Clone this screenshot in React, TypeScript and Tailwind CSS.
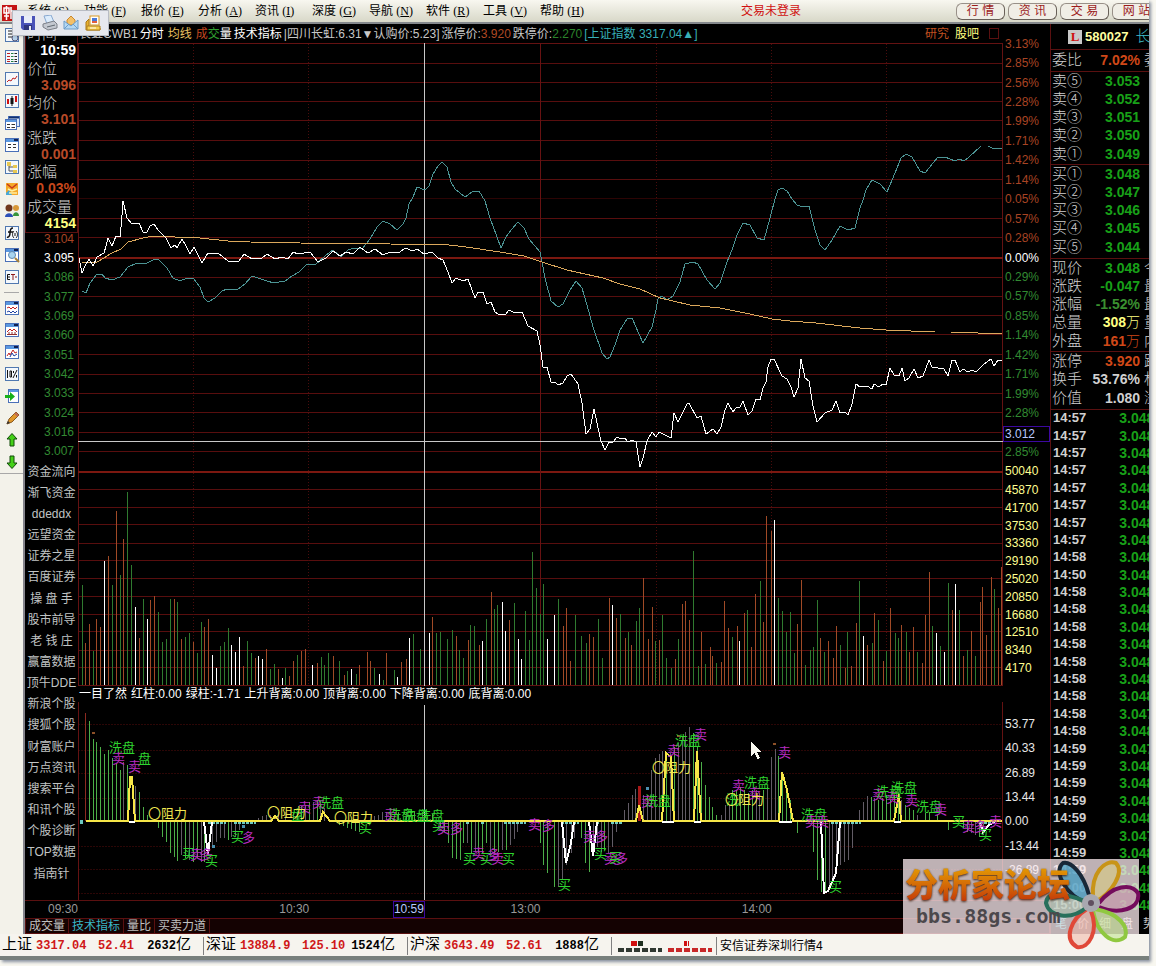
import type { ReactNode } from 'react'
import clsx from 'clsx'

const MENU = [
  ['系统', 'S'], ['功能', 'F'], ['报价', 'E'], ['分析', 'A'], ['资讯', 'I'],
  ['深度', 'G'], ['导航', 'N'], ['软件', 'R'], ['工具', 'V'], ['帮助', 'H'],
]

const CURSOR_INFO = [
  ['时间', '10:59', 'text-white'],
  ['价位', '3.096', 'text-[#b84a28]'],
  ['均价', '3.101', 'text-[#b84a28]'],
  ['涨跌', '0.001', 'text-[#b84a28]'],
  ['涨幅', '0.03%', 'text-[#c8481c]'],
  ['成交量', '4154', 'text-[#ffff80]'],
]

const PRICE_LABELS = ['3.104', '3.095', '3.086', '3.077', '3.069', '3.060', '3.051', '3.042', '3.033', '3.024', '3.016', '3.007']

const SIDE_LINKS = [
  '资金流向', '渐飞资金', 'ddeddx', '远望资金', '证券之星', '百度证券', '操 盘 手', '股市前导', '老 钱 庄', '赢富数据',
  '顶牛DDE', '新浪个股', '搜狐个股', '财富账户', '万点资讯', '搜索平台', '和讯个股', '个股诊断', 'TOP数据', '指南针',
]

const PERCENT_LABELS = [
  '3.13%', '2.85%', '2.56%', '2.28%', '1.99%', '1.71%', '1.42%', '1.14%', '0.05%', '0.57%', '0.28%', '0.00%',
  '0.29%', '0.57%', '0.85%', '1.14%', '1.42%', '1.71%', '1.99%', '2.28%', '', '2.85%', '50040',
]
const VOLUME_LABELS = ['45870', '41700', '37530', '33360', '29190', '25020', '20850', '16680', '12510', '8340', '4170']
const INDICATOR_LABELS = ['53.77', '40.33', '26.89', '13.44', '0.00', '-13.44', '-26.89']

const SELL = [['⑤', '3.053'], ['④', '3.052'], ['③', '3.051'], ['②', '3.050'], ['①', '3.049']]
const BUY = [['①', '3.048'], ['②', '3.047'], ['③', '3.046'], ['④', '3.045'], ['⑤', '3.044']]
const QUOTE = [
  ['现价', '3.048', '今', 'text-[#18a018]'],
  ['涨跌', '-0.047', '最', 'text-[#18a018]'],
  ['涨幅', '-1.52%', '最', 'text-[#3a9030]'],
  ['总量', '308万', '量', 'text-[#ffff80]'],
  ['外盘', '161万', '内', 'text-[#d04818]'],
]
const LIMITS = [
  ['涨停', '3.920', '跌', 'text-[#d04818]'],
  ['换手', '53.76%', '权', 'text-[#d0d0d0]'],
  ['价值', '1.080', '溢', 'text-[#d0d0d0]'],
]
const TICKS = [
  ...Array(8).fill('14:57'), '14:58', '14:50', ...Array(9).fill('14:58'), ...Array(8).fill('14:59'), '15:00', '15:00',
] as string[]
const LOWER_TICKS = [17, 19, 24]

const GRID_Y = [
  63, 82, 101, 120, 140, 160, 179, 198, 218, 237, 277, 296, 315, 334, 354, 374, 393, 412, 432, 451,
  489, 507, 524, 543, 560, 578, 596, 614, 631, 650, 667,
]
const GRID_X = [193, 308, 656, 771, 886]

const PRICE =
  '79,258 82,273 85,266 89,259 93,266 97,257 104,253 106,246 108,238 112,246 116,236 120,237 121,227 122,215 123,201 127,218 132,224 139,223 143,232 147,232 150,226 154,224 158,230 166,238 171,248 175,245 177,248 182,239 186,246 190,254 194,247 202,263 208,253 218,253 228,261 239,261 244,254 252,259 262,258 267,254 275,259 282,257 288,259 293,252 298,254 310,252 318,262 326,258 333,251 340,256 346,252 353,254 360,247 368,253 375,249 383,255 390,252 400,252 405,248 413,251 417,249 424,254 432,252 438,258 443,260 448,272 452,283 456,278 463,281 468,279 475,298 478,292 483,292 487,304 491,302 495,312 498,314 506,314 509,310 513,312 522,312 528,326 537,331 540,345 543,367 547,367 551,382 555,382 558,385 563,383 567,376 571,374 578,384 582,403 586,434 590,429 594,409 597,423 601,441 605,450 609,442 613,442 617,437 621,439 625,438 628,442 632,440 636,442 640,467 643,458 647,441 652,432 656,437 659,432 671,438 674,413 678,422 683,412 687,404 689,403 697,418 701,416 706,434 713,429 717,434 721,427 725,410 728,403 733,412 736,408 740,407 743,401 748,415 752,411 756,399 760,400 763,388 766,382 768,367 771,359 774,359 782,376 787,379 791,387 794,397 798,388 801,359 805,378 809,381 813,406 817,422 825,413 832,410 836,401 840,413 845,412 848,415 852,404 856,384 860,387 867,386 872,389 874,384 879,387 883,384 886,385 890,368 894,375 899,376 902,368 905,381 909,378 914,369 918,378 923,376 929,360 932,367 944,369 948,376 952,360 955,360 960,372 963,369 968,372 972,370 976,372 983,365 991,359 994,366 998,360 1002,360'
const AVERAGE =
  '82,262 97,262 104,258 110,254 121,249 128,242 143,238 153,236 175,237 200,238 228,241 250,242 300,243 390,244 449,245 466,247 500,252 524,256 542,262 567,270 603,278 620,284 640,289 660,298 690,305 700,306 720,308 750,314 772,319 790,321 816,323 860,328 886,330 935,332'
const AVERAGE_TAIL = '951,332 978,333 1002,334'
const INDEX =
  '82,291 86,293 90,283 97,274 102,274 105,278 112,280 120,277 128,267 137,263 147,263 155,259 159,260 167,268 173,278 180,281 187,278 194,279 200,287 204,298 208,302 215,298 222,291 227,289 238,289 245,284 252,276 258,278 267,281 274,283 285,281 292,276 299,272 307,264 315,265 325,256 333,250 341,257 348,250 354,248 362,249 370,239 377,227 383,221 390,224 397,230 403,224 406,218 409,204 413,197 417,187 425,190 429,186 433,174 438,166 442,162 447,167 451,182 455,189 465,197 472,192 479,191 485,201 490,218 497,237 501,248 506,237 512,229 518,222 524,228 529,239 540,252 542,262 545,278 551,301 558,307 563,304 570,290 576,281 582,288 587,305 593,327 602,353 607,359 610,357 615,345 620,330 627,319 632,318 643,343 652,327 656,310 658,299 662,296 667,300 673,296 680,282 685,264 693,262 698,264 707,280 715,289 720,283 727,262 732,250 737,235 743,223 750,225 757,238 764,240 770,218 775,199 778,190 782,188 787,191 792,199 797,205 803,207 809,206 815,230 820,245 825,250 832,240 840,226 848,230 855,228 860,208 863,200 866,190 872,180 880,184 887,192 895,173 901,158 906,154 912,157 920,171 925,173 933,163 938,157 945,157 955,161 959,159 964,161 969,157 981,146'
const INDEX_TAIL = '988,146 994,149 1002,148'

// each bar is colour letter + x,y of its tip
const VOLUME =
  'g82,585 r85,643 r89,624 g93,651 r96,619 r100,627 w104,561 r108,556 g112,585 r116,511 g120,575 r123,539 g127,492 g131,565 w135,607 r139,638 g143,599 w147,619 r150,600 r154,596 g158,612 g162,642 g166,639 g170,599 r174,599 g177,602 r181,639 g185,637 g189,633 r193,642 g197,653 g201,622 r204,627 r208,619 w212,655 w216,668 g220,646 g224,642 g228,628 w231,645 w235,652 w239,637 r243,666 g247,641 g251,653 r255,658 w258,656 w262,659 r266,649 g270,669 g274,664 r278,669 w282,678 g285,668 r289,676 r293,661 g297,655 r301,651 r305,649 w312,665 r317,663 g321,657 g324,665 g328,653 r333,656 g339,661 r344,675 g347,671 w351,669 g356,674 r359,665 r367,652 r370,661 g374,668 w379,674 g383,680 r386,653 g394,670 w397,677 r401,662 r406,659 w409,638 g413,634 g420,649 w429,633 r432,617 g436,633 g440,632 g447,639 g452,630 r456,636 g459,650 g463,658 r468,640 g470,625 g474,626 r479,645 w482,641 g486,619 r491,592 g494,609 g497,605 w502,602 w505,631 r509,620 g514,603 w518,639 w521,659 g525,611 g529,640 g532,552 g536,588 g540,614 g543,584 w547,639 w554,615 g558,599 r563,626 r566,608 r570,661 g575,615 g581,636 g586,643 r589,634 r593,637 g598,619 g602,658 r609,598 w612,605 r616,618 g620,614 r625,638 g628,632 r631,645 g636,621 g639,608 r643,578 r648,639 r652,607 g655,641 r659,640 g662,615 g666,658 g671,668 r675,659 g678,639 r682,604 r685,601 r689,620 g693,551 g698,666 r701,632 g705,664 r710,647 r712,656 g716,663 r721,662 r724,601 r728,628 g732,637 r737,626 w739,641 r744,613 g747,610 r751,647 r755,594 g760,581 r763,622 r766,516 r771,531 w774,520 g778,598 g782,611 g786,632 g790,612 g794,653 r797,624 r801,580 g805,665 g810,650 g813,647 g817,600 r820,638 g824,652 r828,641 r833,658 r836,626 g840,645 r845,668 g847,632 r851,666 r856,623 g859,581 w863,636 r867,645 g872,643 r874,613 g878,620 r883,661 g886,651 r890,608 g895,633 g898,638 r901,625 g906,632 r909,652 r913,627 g917,652 r922,663 r925,615 r929,572 g932,626 w936,633 g940,646 w944,652 g948,583 r952,610 w955,584 g959,610 r963,656 g967,650 r971,631 g975,656 r980,602 r982,587 r986,635 r991,577 g994,589 r998,608 r1001,567'
const OSCILLATOR =
  'e85,713 l89,721 l93,739 l96,742 l100,747 l104,754 l108,750 l112,758 l116,764 l120,770 k123,762 l127,765 k135,786 l139,792 l143,807 l147,815 l158,828 l162,837 l166,842 l170,853 l174,857 l177,861 k181,855 l185,858 k189,860 l193,862 l197,858 k201,862 l204,862 k212,847 k216,842 k220,838 k224,838 l228,840 k231,837 k235,837 k239,830 k258,818 k262,816 k266,815 k270,815 k278,812 k285,812 k293,812 l297,812 l301,806 k305,805 l309,802 k313,802 l317,800 k320,802 k324,808 l339,825 l343,826 l347,828 l351,829 l355,831 l359,832 k374,816 k378,815 k382,812 k386,812 l390,812 l398,812 k406,812 l414,812 k422,812 l432,814 l440,828 l444,832 l448,843 l452,858 l456,859 l460,860 l463,843 k467,843 l471,853 k475,852 l478,853 l482,853 l486,843 k490,853 l494,853 l498,852 k502,850 l506,850 k510,845 k514,839 k517,832 l540,843 l543,865 l547,873 l554,887 k558,887 k562,880 k566,865 k571,853 k574,838 l581,838 l585,863 l589,872 k593,855 k597,847 k601,852 l604,850 k608,853 k612,847 k616,832 k624,810 k628,803 k632,795 k635,789 k643,795 k647,797 k651,770 k655,758 k659,754 k662,751 l666,753 k670,753 l674,747 k678,743 k682,737 k685,732 k689,727 l693,733 l697,747 l701,762 l705,785 l709,797 l712,807 l716,815 k721,815 k725,805 k729,805 l732,790 l736,790 l740,787 l744,790 l748,793 l752,790 k756,790 k759,793 l763,790 k767,787 k771,757 k775,749 l778,756 l782,780 l786,787 l790,800 l797,833 l813,852 l817,880 l821,892 l825,892 k829,887 k832,882 k836,873 k840,865 k844,862 k848,860 k852,848 k859,810 k863,802 k867,796 l871,797 k874,798 l878,800 l882,798 l886,795 l890,800 l894,795 l898,793 k901,800 l905,805 l909,808 l913,810 k917,815 l925,813 l929,812 l937,815 l948,830 l963,828 l967,832 k971,833 k975,835 l979,837 k983,835'

const BAR_COLORS: Record<string, string> = {
  g: '#2f7a2f', r: '#a04a26', w: '#ffffff', k: '#625c66', l: '#4cae48', e: '#8c2a20',
}

const YELLOW =
  '86,821 128,821 130,777 132,777 135,821 271,821 275,816 279,821 320,821 323,812 330,821 636,821 639,805 643,821 662,821 666,753 671,757 674,821 694,821 697,751 701,821 779,821 782,772 787,790 793,821 894,821 899,794 901,821 1002,821'
const WHITE_DIPS = [
  '204,822 208,855 212,822',
  '562,822 566,863 571,843 574,822',
  '589,822 593,856 597,822',
  '821,822 824,893 828,891 836,873 840,822',
  '980,823 983,832 989,825 995,822',
]
const CYAN_RUNS = [[80, 83], [208, 226], [234, 256], [466, 469], [481, 484], [504, 526], [561, 579], [596, 599], [611, 622], [831, 861], [980, 993]]

const TONES: Record<string, string> = {
  g: 'text-[#2fd42f]',
  m: 'text-[#b82cc0]',
  y: 'text-[#f0e850]',
}
const MARKERS: [string, number, number, string][] = [
  ['洗盘', 109, 748, 'g'], ['卖', 112, 759, 'm'], ['卖', 128, 767, 'm'], ['盘', 138, 759, 'g'], ['〇阻力', 148, 814, 'y'],
  ['买', 182, 854, 'g'], ['卖', 190, 855, 'm'], ['多', 200, 855, 'm'], ['买', 205, 861, 'g'], ['买', 231, 837, 'g'], ['多', 242, 838, 'm'],
  ['卖', 298, 808, 'm'], ['盘', 291, 815, 'g'], ['〇阻力', 267, 813, 'y'], ['卖', 312, 803, 'm'], ['洗盘', 318, 803, 'g'],
  ['〇阻力', 334, 818, 'y'], ['买', 359, 828, 'g'], ['卖', 384, 815, 'm'], ['洗盘', 388, 815, 'g'], ['洗盘', 403, 816, 'g'],
  ['洗盘', 418, 816, 'g'], ['买', 432, 826, 'g'], ['卖', 437, 829, 'm'], ['多', 450, 829, 'm'], ['买', 463, 859, 'g'],
  ['卖', 472, 854, 'm'], ['买', 480, 859, 'g'], ['多', 487, 855, 'm'], ['卖', 491, 859, 'm'], ['买', 502, 859, 'g'],
  ['卖', 528, 825, 'm'], ['多', 542, 826, 'm'], ['买', 558, 885, 'g'], ['卖', 583, 837, 'm'], ['多', 595, 837, 'm'],
  ['买', 594, 854, 'g'], ['卖', 604, 859, 'm'], ['买', 609, 858, 'g'], ['多', 615, 859, 'm'], ['卖', 641, 802, 'm'],
  ['洗盘', 645, 801, 'g'], ['〇阻力', 652, 768, 'y'], ['卖', 667, 751, 'm'], ['洗盘', 675, 741, 'g'], ['卖', 694, 735, 'm'],
  ['卖', 732, 786, 'm'], ['洗盘', 744, 783, 'g'], ['卖', 748, 794, 'm'], ['洗', 726, 800, 'g'], ['〇阻力', 725, 800, 'y'],
  ['卖', 778, 753, 'm'], ['洗盘', 801, 815, 'g'], ['卖', 805, 822, 'm'], ['卖', 816, 822, 'm'], ['买', 829, 887, 'g'],
  ['卖', 872, 795, 'm'], ['洗盘', 876, 792, 'g'], ['卖', 886, 798, 'm'], ['洗盘', 891, 788, 'g'], ['卖', 905, 801, 'm'],
  ['洗盘', 916, 807, 'g'], ['卖', 934, 810, 'm'], ['买', 952, 822, 'g'], ['卖', 962, 827, 'm'], ['多', 974, 827, 'm'],
  ['买', 979, 835, 'g'], ['卖', 989, 822, 'm'],
]

function Bars({ data, base }: { data: string; base: number }) {
  return (
    <>
      {data.split(' ').map((bar) => {
        const [x, y] = bar.slice(1).split(',').map(Number)
        return <line key={bar} x1={x + 0.5} x2={x + 0.5} y1={y} y2={base} stroke={BAR_COLORS[bar[0]]} />
      })}
    </>
  )
}

function PriceChart() {
  return (
    <svg viewBox="78 43 925 643" preserveAspectRatio="none" className="block h-[643px] w-full" shapeRendering="crispEdges" fill="none">
      {GRID_Y.map((y) => (
        <line key={y} x1="78" x2="1003" y1={y + 0.5} y2={y + 0.5} stroke={y === 198 ? '#2c0404' : '#580e0e'} />
      ))}
      {GRID_X.map((x) => (
        <line key={x} x1={x + 0.5} x2={x + 0.5} y1="44" y2="686" stroke="#4a0c0c" strokeDasharray="1 2" />
      ))}
      <path d="M78 43.5H1003M78 685.5H1003M78.5 43V686M1002.5 43V686" stroke="#641212" />
      <path d="M78 258H1003M78 472H1003" stroke="#7c1810" strokeWidth="2" />
      <path d="M540.5 43V686" stroke="#681212" />
      <Bars data={VOLUME} base={685} />
      <path d="M424.5 43V686M78 441.5H1003" stroke="#c8c8c8" />
      <polyline points={INDEX} stroke="#4c9494" />
      <polyline points={INDEX_TAIL} stroke="#4c9494" />
      <polyline points={AVERAGE} stroke="#dca85c" />
      <polyline points={AVERAGE_TAIL} stroke="#dca85c" />
      <polyline points={PRICE} stroke="#ffffff" />
    </svg>
  )
}

function OscillatorChart() {
  return (
    <div className="relative">
      <svg viewBox="78 702 925 198" preserveAspectRatio="none" className="block h-[198px] w-full" shapeRendering="crispEdges" fill="none">
        {[724, 750, 773, 798, 846, 869, 893].map((y) => (
          <line key={y} x1="78" x2="1003" y1={y + 0.5} y2={y + 0.5} stroke="#2c0606" strokeDasharray="2 1" />
        ))}
        <path d="M78.5 702V900M1002.5 702V900" stroke="#641212" />
        <Bars data={OSCILLATOR} base={821} />
        <path d="M424.5 705V900" stroke="#c8c8c8" />
        <path d="M639 786V821" stroke="#a81818" strokeWidth="3" />
        {CYAN_RUNS.map(([from, to]) => (
          <path key={from} d={`M${from} 822H${to}`} stroke="#6cc8c0" strokeWidth="4" strokeDasharray="3 1" />
        ))}
        {WHITE_DIPS.map((points) => (
          <polyline key={points} points={points} stroke="#ffffff" strokeWidth="2" />
        ))}
        <polyline points={YELLOW} stroke="#f6e648" strokeWidth="2" />
        <path d="M129 822H135M662 822H674M694 822H701M779 822H792M894 822H901" stroke="#ffffff" strokeWidth="2" />
        <path d="M92 732.5H95M773 743.5H776M677 735.5H680" stroke="#8c5028" strokeWidth="2" />
        <path d="M212 846h3M646 788.500h3M242 826.500h3" stroke="#4c90b0" strokeWidth="3" />
        <path d="M751 741V756L754.500 753L757.500 759L760 758L757 752H761Z" fill="#f8f8f0" />
      </svg>
      {MARKERS.map(([label, x, y, tone], i) => (
        <span
          key={i}
          className={clsx('absolute text-[13px] leading-4 whitespace-nowrap', TONES[tone])}
          style={{ left: `${((x - 78) / 925) * 100}%`, top: y - 710 }}
        >
          {label}
        </span>
      ))}
    </div>
  )
}

function Win({ children }: { children?: ReactNode }) {
  return (
    <>
      <rect x="1.500" y="1.500" width="13" height="13" fill="#fff" stroke="#4a70b8" />
      <path d="M2 3.500H14" stroke="#5a98e0" strokeWidth="3" />
      <path d="M10 3H14" stroke="#102050" strokeWidth="2" />
      {children}
    </>
  )
}

function Frame({ children }: { children?: ReactNode }) {
  return (
    <>
      <rect x="1.500" y="1.500" width="13" height="13" fill="#f4f8fc" stroke="#5078b0" />
      {children}
    </>
  )
}

const TOOLS: [string, ReactNode][] = [
  ['打开', <Frame><path d="M4 4H8M4 7H8M4 10H8" stroke="#222" /><circle cx="11" cy="11" r="3" fill="#b8d4ec" stroke="#557" /></Frame>],
  ['行情报价', <Frame><path d="M3 4.500H6M3 7.500H6M3 10.500H6M3 12.500H6" stroke="#c02020" /><path d="M7 4.500H9.500M7 7.500H9.500M7 10.500H9.500M7 12.500H9.500" stroke="#208040" /><path d="M10.500 4.500H13M10.500 7.500H13M10.500 10.500H13M10.500 12.500H13" stroke="#222" /></Frame>],
  ['分时走势', <Frame><path d="M3 11L5 9L7 10L9 7L11 8L13 5" stroke="#c02020" /></Frame>],
  ['K线图', <Frame><path d="M4 6V11M12 3V9" stroke="#d01010" strokeWidth="2" /><path d="M8 3V13" stroke="#111" /><path d="M8 5V11" stroke="#111" strokeWidth="3" /></Frame>],
  ['多窗口', <><rect x="4.500" y="1.500" width="11" height="10" fill="#d8e8f8" stroke="#4a70b8" /><path d="M5 2.500H15" stroke="#103070" strokeWidth="2" /><rect x="1.500" y="4.500" width="11" height="10" fill="#fff" stroke="#4a70b8" /><path d="M2 6H12" stroke="#5a98e0" strokeWidth="2" /><path d="M3 9.500H6M7.500 9.500H11M3 12.500H6M7.500 12.500H11" stroke="#333" /></>],
  ['列表', <Win><path d="M4 7.500H7M9 7.500H12M4 10.500H7M9 10.500H12" stroke="#333" /></Win>],
  ['板块树', <Frame><path d="M5 5V12H9M5 8H9" stroke="#555" /><rect x="3" y="3" width="4" height="4" fill="#e8c850" /><rect x="9" y="6" width="4" height="3" fill="#e8c850" /><rect x="9" y="11" width="4" height="3" fill="#e8c850" /></Frame>],
  ['邮件', <><rect x="2" y="2" width="12" height="12" fill="#f4a828" /><path d="M2 12L5 9L8 14H2Z" fill="#48a8d8" /><path d="M3 3L8 7L13 3" stroke="#c83818" strokeWidth="1.500" /><path d="M4 8L8 10L13 8M5 12H13" stroke="#fff0a0" strokeWidth="1.500" /></>],
  ['用户', <><circle cx="5" cy="5" r="3.500" fill="#70371c" /><circle cx="12" cy="5" r="3" fill="#d89838" /><path d="M1 14C1 9 9 9 9 14Z" fill="#2c50b8" /><path d="M9 13C9 8 15 8 15 13Z" fill="#38943c" /></>],
  ['公式', <Frame><path d="M9 3C6 3 6 6 6 8S5 13 3 12M4 7H9" stroke="#111" strokeWidth="1.500" /><path d="M10 6C8 8 8 11 10 13M12 6C14 8 14 11 12 13M11 8V11" stroke="#111" /></Frame>],
  ['查找', <Win><circle cx="8" cy="8" r="3.500" fill="#a8d4f0" stroke="#6088b0" /><path d="M11 11L15 15" stroke="#a88038" strokeWidth="2" /></Win>],
  ['ET', <Frame><path d="M6 5.500H3.500V10.500H6M3.500 8H6" stroke="#111" /><path d="M7 5.500H11M9 5.500V11M11 8H13" stroke="#901818" /></Frame>],
  ['', null],
  ['叠加', <Win><path d="M3 8L5 7L7 9L9 7L11 9L13 7" stroke="#c02020" /><path d="M3 12L5 11L7 13L9 11L11 13L13 11" stroke="#2040a0" /></Win>],
  ['历史', <Win><path d="M3 10L6 7L8 9L10 7L13 10" stroke="#c02020" /><path d="M3 12.500H13M5 10V12M8 10V12M11 10V12" stroke="#903030" /></Win>],
  ['对比', <Win><path d="M3 12L5 9L6 11L9 6L11 9L13 8" stroke="#c02020" /><path d="M6 13L8 9L10 12L13 10" stroke="#2040a0" /></Win>],
  ['百分比', <Frame><path d="M3.500 4V12M6 5V11H7.500V5ZM9 12L13 4M9.500 5V7M12.500 9V11.500" stroke="#111" /></Frame>],
  ['转到', <><rect x="4.500" y="1.500" width="10" height="13" fill="#fff" stroke="#4a70b8" /><path d="M5 3H14" stroke="#5a98e0" strokeWidth="2" /><path d="M1 7H6V4L11 8.500L6 13V10H1Z" fill="#18b018" /></>],
  ['画线', <><path d="M3 14L5 9L12 2L15 5L8 12Z" fill="#e0982c" stroke="#8a5a20" /><path d="M11 3L14 6" stroke="#c06858" strokeWidth="2" /><path d="M2.500 14L4 11L6 13Z" fill="#333" /></>],
  ['上一个', <path d="M8 1.500L13 7H10V14H6V7H3Z" fill="#44d018" stroke="#104a08" />],
  ['下一个', <path d="M8 14.500L13 9H10V2H6V9H3Z" fill="#44d018" stroke="#104a08" />],
]

function ToolStrip() {
  return (
    <aside className="flex w-[25px] shrink-0 flex-col border-r-2 border-[#84848c] bg-[#f3f2ea]">
      {TOOLS.map(([label, icon], i) =>
        icon ? (
          <button key={i} aria-label={label} className="flex h-[22px] w-[23px] items-center justify-center">
            <svg width="16" height="16" viewBox="0 0 16 16" fill="none">{icon}</svg>
          </button>
        ) : (
          <div key={i} className="mx-1 my-1 border-t border-[#a8a8a8]" />
        ),
      )}
      <div className="border-t border-[#a8a8a8]" />
    </aside>
  )
}

function FloatingToolbar() {
  return (
    <div className="absolute top-[10px] left-[12px] z-10 flex h-[26px] w-[97px] items-center justify-around border border-[#b8bcc4] bg-[#e6e8ee] px-1 shadow">
      <button aria-label="保存">
        <svg width="16" height="16" viewBox="0 0 16 16" fill="none">
          <path d="M1 1H15V15H3L1 13Z" fill="#4a52b8" />
          <rect x="4" y="1" width="8" height="7" fill="#e8ecf8" />
          <rect x="4" y="10" width="8" height="5" fill="#30367c" />
          <rect x="9" y="11" width="2" height="4" fill="#e8ecf8" />
        </svg>
      </button>
      <button aria-label="打印">
        <svg width="16" height="16" viewBox="0 0 16 16" fill="none">
          <path d="M2 1L9 0L12 7L5 9Z" fill="#dcecfc" stroke="#88a8d0" />
          <path d="M1 9L12 6L15 9V13L6 15L1 12Z" fill="#c4c8d0" stroke="#7c8088" />
          <path d="M5 12L13 10" stroke="#606870" />
        </svg>
      </button>
      <button aria-label="邮件">
        <svg width="16" height="16" viewBox="0 0 16 16" fill="none">
          <path d="M4 5L8 1L12 5V10H4Z" fill="#f4c068" stroke="#c88830" />
          <path d="M1 6L8 11L15 5V14H1Z" fill="#b4d8f4" stroke="#6c9cc8" />
          <path d="M1 14L6 9M15 14L10 9" stroke="#6c9cc8" />
        </svg>
      </button>
      <button aria-label="图片">
        <svg width="16" height="16" viewBox="0 0 16 16" fill="none">
          <path d="M1 7L4 4V13H15V15H1Z" fill="#e8b030" stroke="#a87818" />
          <rect x="5" y="1" width="9" height="9" fill="#fff" stroke="#d89820" />
          <rect x="7" y="3" width="5" height="3" fill="#4878d8" />
          <rect x="7" y="6" width="5" height="2" fill="#e06040" />
          <path d="M2 11H15V15H2Z" fill="#f8d050" stroke="#b08020" />
          <path d="M5 13H11" stroke="#fff" />
        </svg>
      </button>
    </div>
  )
}

function MenuBar() {
  return (
    <header className="flex h-6 items-center overflow-hidden border-b-2 border-[#84888c] bg-gradient-to-b from-[#f8f7f0] to-[#d8d8c8] text-xs">
      <svg width="17" height="20" viewBox="0 0 17 20" fill="none" className="shrink-0">
        <path d="M2 4H17V20H2Z" fill="#c41414" />
        <path d="M4 7H9V12H4ZM6.500 5V19M11 6V18M11 10H15M4 15H9" stroke="#fff" strokeWidth="1.500" />
      </svg>
      <nav className="ml-[10px] flex">
        {MENU.map(([label, key]) => (
          <button key={key} className="w-[57px] text-left whitespace-nowrap text-black">
            {label} <span className="font-['Liberation_Serif']">(<u>{key}</u>)</span>
          </button>
        ))}
      </nav>
      <span className="ml-36 flex-1 whitespace-nowrap text-[#d01010]">交易未登录</span>
      <div className="flex w-[193px] shrink-0 gap-[3px] overflow-hidden">
        {['行 情', '资 讯', '交 易', '网 站'].map((label) => (
          <button key={label} className="h-[17px] w-[49px] shrink-0 rounded-md border border-[#989088] border-r-[#686058] border-b-[#686058] bg-[#f0eee6] text-xs leading-none text-[#9c1c1c]">
            {label}
          </button>
        ))}
      </div>
    </header>
  )
}

function InfoColumn() {
  return (
    <div className="flex w-[53px] shrink-0 flex-col">
      <dl className="flex h-[209px] flex-col border border-t-0 border-[#5a1010] pt-px">
        {CURSOR_INFO.map(([label, value, tone]) => (
          <div key={label} className="flex flex-1 flex-col">
            <dt className="flex-1 pl-px text-[15px] leading-[17px] font-light text-[#d0d0d0]">{label}</dt>
            <dd className={clsx('flex-1 pr-px text-right text-sm leading-[17px] font-bold', tone)}>{value}</dd>
          </div>
        ))}
      </dl>
      <div className="-mt-1 flex h-[232px] flex-col pr-1 text-right text-xs">
        {PRICE_LABELS.map((label, i) => (
          <span
            key={label}
            className={clsx('flex flex-1 items-center justify-end', i === 0 ? 'text-[#a84424]' : i === 1 ? 'text-white' : 'text-[#328a32]')}
          >
            {label}
          </span>
        ))}
      </div>
      <div className="flex h-[423px] flex-col text-xs text-[#c0c4c4]">
        {SIDE_LINKS.map((label) => (
          <button key={label} className="flex-1 leading-4 whitespace-nowrap">{label}</button>
        ))}
      </div>
    </div>
  )
}

function AxisColumn() {
  return (
    <div className="relative flex w-[47px] shrink-0 flex-col pl-[2px] text-xs">
      <div className="mt-[10px] flex h-[447px] flex-col">
        {PERCENT_LABELS.map((label, i) => (
          <span
            key={i}
            className={clsx(
              'flex flex-1 items-center',
              i < 11 ? 'text-[#a84424]' : i === 11 ? 'text-white' : i === 22 ? 'text-[#ffff90]' : 'text-[#328a32]',
            )}
          >
            {label}
          </span>
        ))}
      </div>
      <div className="flex h-[196px] flex-col text-[#ffff90]">
        {VOLUME_LABELS.map((label) => (
          <span key={label} className="flex flex-1 items-center">{label}</span>
        ))}
      </div>
      <div className="mt-[35px] flex h-[170px] flex-col text-[#e8e8e8]">
        {INDICATOR_LABELS.map((label) => (
          <span key={label} className="flex flex-1 items-center">{label}</span>
        ))}
      </div>
      <div className="absolute top-[402px] left-0 h-4 w-[47px] border border-[#3c08a0] bg-black pl-px leading-[14px] text-[#b8c8ff]">3.012</div>
    </div>
  )
}

function ChartHeader() {
  return (
    <div className="flex h-[19px] items-center gap-0.5 overflow-hidden text-xs whitespace-nowrap text-[#c8c8c8]">
      <span className="pl-px">长虹CWB1</span>
      <span className="text-white">分时</span>
      <span className="mx-0.5 text-[#e8c060]">均线</span>
      <span><span className="text-[#c04820]">成</span><span className="text-[#30a030]">交</span><span className="text-white">量</span></span>
      <span className="text-white">技术指标</span>
      <span>|四川长虹:6.31▼认购价:5.23]</span>
      <span>涨停价:<span className="text-[#b04a24]">3.920</span></span>
      <span>跌停价:<span className="text-[#2c842c]">2.270</span></span>
      <span className="text-[#38b0b8]">[上证指数 3317.04▲]</span>
      <a href="#research" className="ml-auto text-[#c05020]">研究</a>
      <a href="#forum" className="ml-1 text-[#ffff80]">股吧</a>
      <span className="mr-1 ml-2 h-[11px] w-[10px] border border-[#5a1010]" />
    </div>
  )
}

function QuoteRows({ rows }: { rows: string[][] }) {
  return (
    <tbody className="border-b border-[#5a1010]">
      {rows.map(([label, value, next, tone]) => {
        const unit = value.endsWith('万') ? '万' : ''
        return (
          <tr key={label} className="h-[18px] last:h-[21px]">
            <th scope="row" className="w-8 p-0 pl-px text-left text-[15px] leading-[18px] font-light whitespace-nowrap text-[#d0d0d0]">{label}</th>
            <td className={clsx('w-[57px] p-0 text-right text-sm leading-[18px] font-bold', tone)}>
              {value.replace('万', '')}
              {unit && <span className="font-light">{unit}</span>}
            </td>
            <td className="p-0 pl-1 text-[15px] leading-[18px] font-light text-[#d0d0d0]">{next}</td>
          </tr>
        )
      })}
    </tbody>
  )
}

function QuotePanel() {
  const side = (name: string, rows: string[][]) => rows.map(([n, p]) => [name + n, p, '', 'text-[#18a018]'])
  return (
    <section className="flex w-[99px] shrink-0 flex-col overflow-hidden border-l border-[#5a1010]">
      <div className="flex h-[26px] shrink-0 items-center gap-[3px] border-b border-[#5a1010] pl-[17px] text-[13px] font-bold whitespace-nowrap text-[#ffffa0]">
        <span className="h-[14px] w-[14px] shrink-0 bg-[#c8c8c8] text-center font-['Liberation_Serif'] leading-[14px] text-[#d01010]">L</span>
        580027
        <span className="ml-1 text-[15px] font-light text-[#40c0d0]">长虹</span>
      </div>
      <table className="w-[106px] table-fixed border-collapse">
        <QuoteRows rows={[['委比', '7.02%', '委', 'text-[#d04818]']]} />
        <QuoteRows rows={side('卖', SELL)} />
        <QuoteRows rows={side('买', BUY)} />
        <QuoteRows rows={QUOTE} />
        <QuoteRows rows={LIMITS} />
      </table>
      <ol className="flex flex-1 flex-col pl-[2px] font-bold">
        {TICKS.map((time, i) => (
          <li key={i} className="flex flex-1 items-center gap-[33px]">
            <time className="text-[13px] leading-4 text-[#d0d0d0]">{time}</time>
            <span className="text-sm leading-4 text-[#18a018]">{LOWER_TICKS.includes(i) ? '3.047' : '3.048'}</span>
          </li>
        ))}
      </ol>
      <div className="flex h-5 shrink-0 items-center gap-[10px] pl-1 text-xs text-[#c8c8c8]">
        {['笔', '价', '细', '盘', '势'].map((label) => (
          <button key={label} className={clsx('shrink-0', label === '笔' && 'text-[#38b0b8]')}>{label}</button>
        ))}
      </div>
    </section>
  )
}

function TimeAxis() {
  return (
    <div className="flex h-[18px] border-t border-[#5a1010] text-xs leading-4 text-[#989898]">
      <span className="w-[53px] shrink-0 text-right">09:30</span>
      <div className="grid flex-1 grid-cols-8 text-right">
        <span />
        <span>10:30</span>
        <span>
          <span className="inline-block h-[17px] w-8 border border-[#3c08a0] text-center leading-[14px] text-[#b8c8ff]">10:59</span>
        </span>
        <span>13:00</span>
        <span />
        <span>14:00</span>
        <span />
        <span />
      </div>
      <span className="w-[47px] shrink-0" />
    </div>
  )
}

function ChartTabs() {
  return (
    <div className="flex h-4 border border-[#5a1010] bg-[#140202] text-xs leading-[14px] text-[#c0c0c0]">
      {['成交量', '技术指标', '量比', '买卖力道'].map((tab, i) => (
        <button key={tab} className={clsx('border-r border-[#5a1010] px-[3px]', i === 1 && 'text-[#38b8c8]')}>
          {tab}
        </button>
      ))}
    </div>
  )
}

function Watermark() {
  return (
    <div className="absolute right-[10px] bottom-0 z-10 h-[75px] w-[236px] bg-[#fdecf0]/75">
      <svg width="98" height="94" viewBox="0 0 98 94" fill="none" strokeWidth="4" className="absolute top-0 left-[140px]">
        <path d="M46 36C40 14 28 2 20 4C10 12 22 36 44 44" fill="#3898c0" fillOpacity=".7" stroke="#182838" />
        <path d="M50 38C48 14 62 0 73 4C82 14 68 34 54 42" fill="#d8cc80" fillOpacity=".6" stroke="#c89418" />
        <path d="M56 44C70 26 88 24 95 34C98 50 76 56 56 48" fill="#c890a8" fillOpacity=".5" stroke="#740c5c" />
        <path d="M52 50C76 54 86 68 82 78C70 88 54 74 50 52" fill="#b8e080" fillOpacity=".5" stroke="#90c840" />
        <path d="M48 52C56 72 46 90 34 88C20 80 28 60 44 50" fill="#f0b0a0" fillOpacity=".5" stroke="#e04838" />
        <path d="M44 48C28 62 6 58 3 44C4 30 26 36 42 42" fill="#a0c0a8" fillOpacity=".5" stroke="#28705c" />
        <circle cx="48" cy="44" r="9" fill="#a8a8b0" />
        <circle cx="48" cy="44" r="3" fill="#605060" />
      </svg>
      <div className="relative bg-gradient-to-b from-[#e8b000] to-[#c02c08] bg-clip-text pt-[9px] pl-[2px] text-[33px] leading-9 font-black text-transparent drop-shadow-[0_1px_1px_#402010]">
        分析家论坛
      </div>
      <div className="relative pl-[13px] font-['DejaVu_Sans_Mono'] text-xl leading-6 font-bold text-[#4c484c]">bbs.88gs.com</div>
    </div>
  )
}

const MARKETS = [
  ['上证', '3317.04', '52.41', '2632'],
  ['深证', '13884.9', '125.10', '1524'],
  ['沪深', '3643.49', '52.61', '1888'],
]

function StatusBar() {
  return (
    <footer className="flex h-[22px] items-center bg-[#f6f4ee] pt-[2px] text-black">
      {MARKETS.map(([name, value, change, amount]) => (
        <div key={name} className="flex h-[18px] w-[204px] shrink-0 items-center border-r border-[#808080] pr-3 pl-[2px] font-['Liberation_Mono','Noto_Sans_CJK_SC'] text-xs font-bold">
          <span className="w-[34px] text-[15px] font-normal">{name}</span>
          <span className="w-[62px] text-[#d01818]">{value}</span>
          <span className="flex-1 text-[#d01818]">{change}</span>
          <span className="flex items-center">{amount}<span className="text-[15px] font-normal">亿</span></span>
        </div>
      ))}
      <div className="flex h-[18px] w-[105px] shrink-0 items-center border-r border-[#808080] pl-[6px]">
        <svg width="95" height="13" viewBox="0 0 95 13" fill="none" shapeRendering="crispEdges">
          <path d="M0 9.500H44" stroke="#303830" strokeWidth="4" strokeDasharray="6 2" />
          <path d="M50 9.500H94" stroke="#c82828" strokeWidth="4" strokeDasharray="6 2" />
          <path d="M13 3H19M66 3H69M70 3H71" stroke="#d01010" strokeWidth="5" />
          <path d="M20 3H25" stroke="#203020" strokeWidth="5" />
        </svg>
      </div>
      <span className="pl-[3px] text-xs whitespace-nowrap">安信证券深圳行情4</span>
    </footer>
  )
}

export default function App() {
  return (
    <div className="min-h-screen bg-[#f8f7f0] pr-[7px] font-['Liberation_Sans','Noto_Sans_CJK_SC',sans-serif]">
      <div className="relative border-b-4 border-[#78807c] shadow-[2px_2px_3px_#8890a0]">
        <FloatingToolbar />
        <MenuBar />
        <main className="relative flex">
          <ToolStrip />
          <div className="flex min-w-0 flex-1 bg-black">
            <div className="flex min-w-0 flex-1 flex-col">
              <div className="flex">
                <InfoColumn />
                <div className="min-w-0 flex-1">
                  <ChartHeader />
                  <PriceChart />
                  <p className="flex h-4 items-center gap-1 overflow-hidden pl-px text-xs whitespace-nowrap text-white">
                    <span>一目了然</span>
                    <span>红柱:0.00</span>
                    <span>绿柱:-1.71</span>
                    <span>上升背离:0.00</span>
                    <span>顶背离:0.00</span>
                    <span>下降背离:0.00</span>
                    <span>底背离:0.00</span>
                  </p>
                  <OscillatorChart />
                </div>
                <AxisColumn />
              </div>
              <TimeAxis />
              <ChartTabs />
            </div>
            <QuotePanel />
          </div>
          <Watermark />
        </main>
        <StatusBar />
      </div>
    </div>
  )
}
